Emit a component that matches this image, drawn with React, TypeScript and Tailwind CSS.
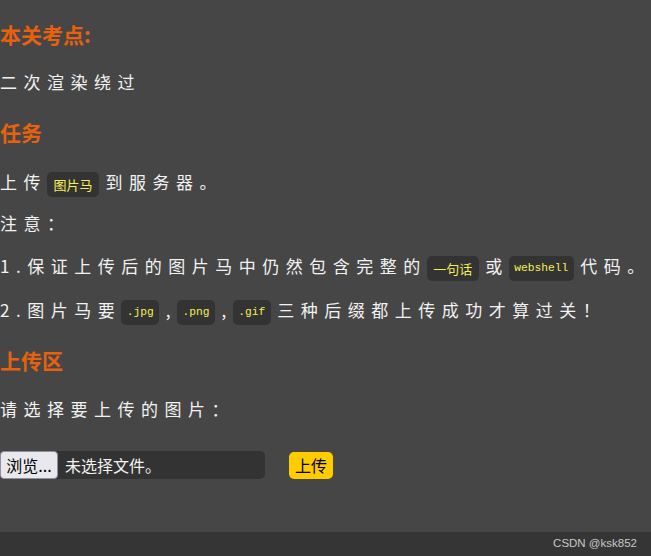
import React from "react";

const body = "font-['Noto_Sans_CJK_SC','Noto_Sans',sans-serif]";

function Code({ children, mono }: { children: React.ReactNode; mono?: boolean }) {
  return (
    <span
      className={`mr-[6.5px] inline-block align-middle rounded-[5px] bg-[#333333] tracking-normal text-[#f6ef55] leading-[25px] h-[25px] ${
        mono
          ? "px-[5.5px] text-[11.25px] font-['Liberation_Mono','Noto_Sans_CJK_SC',monospace]"
          : "px-[6.5px] text-[13px]"
      }`}
    >
      {children}
    </span>
  );
}

function Heading({ children, className }: { children: React.ReactNode; className: string }) {
  return (
    <h2 className={`text-[21px] font-bold leading-[30px] h-[30px] text-[#e8610c] ${className}`}>
      {children}
    </h2>
  );
}

function Line({ children, className }: { children: React.ReactNode; className: string }) {
  return (
    <p className={`h-[26px] text-[17px] leading-[26px] tracking-[6.5px] text-[#f2f2f2] whitespace-nowrap ${className}`}>
      {children}
    </p>
  );
}

export default function App() {
  return (
    <div className={`flex h-[556px] w-[651px] flex-col overflow-hidden bg-[#464646] ${body}`}>
      <div className="flex-1">
        <Heading className="mt-[19px]">本关考点:</Heading>
        <Line className="mt-[20px]">二次渲染绕过</Line>

        <Heading className="mt-[22px]">任务</Heading>
        <Line className="mt-[22px]">
          上传<Code>图片马</Code>到服务器。
        </Line>
        <Line className="mt-[15px]">注意：</Line>
        <Line className="mt-[17px]">
          1.保证上传后的图片马中仍然包含完整的<Code>一句话</Code>或<Code mono>webshell</Code>代码。
        </Line>
        <Line className="mt-[18px]">
          2.图片马要<Code mono>.jpg</Code>,<Code mono>.png</Code>,<Code mono>.gif</Code>三种后缀都上传成功才算过关！
        </Line>

        <Heading className="mt-[22px]">上传区</Heading>
        <Line className="mt-[21px]">请选择要上传的图片：</Line>

        <div className="mt-[29px] flex items-center">
          <div className="flex h-[28px] w-[265px] items-center rounded-[5px] bg-[#333333]">
            <span className="flex h-[28px] w-[58px] items-center justify-center rounded-[4px] border border-[#8f8f9d] bg-[#e9e9ed] text-[16px] text-black">
              浏览...
            </span>
            <span className="ml-[7px] text-[16px] text-[#f2f2f2]">未选择文件。</span>
          </div>
          <button className="ml-[24px] h-[27px] w-[44px] rounded-[5px] bg-[#ffcc00] text-[16px] text-black">
            上传
          </button>
        </div>
      </div>

      <div className="flex h-[24px] items-center justify-end bg-[#353535] pr-[14px]">
        <span className="font-['Liberation_Sans',sans-serif] text-[11.5px] text-[#c8c8c8]">
          CSDN @ksk852
        </span>
      </div>
    </div>
  );
}
